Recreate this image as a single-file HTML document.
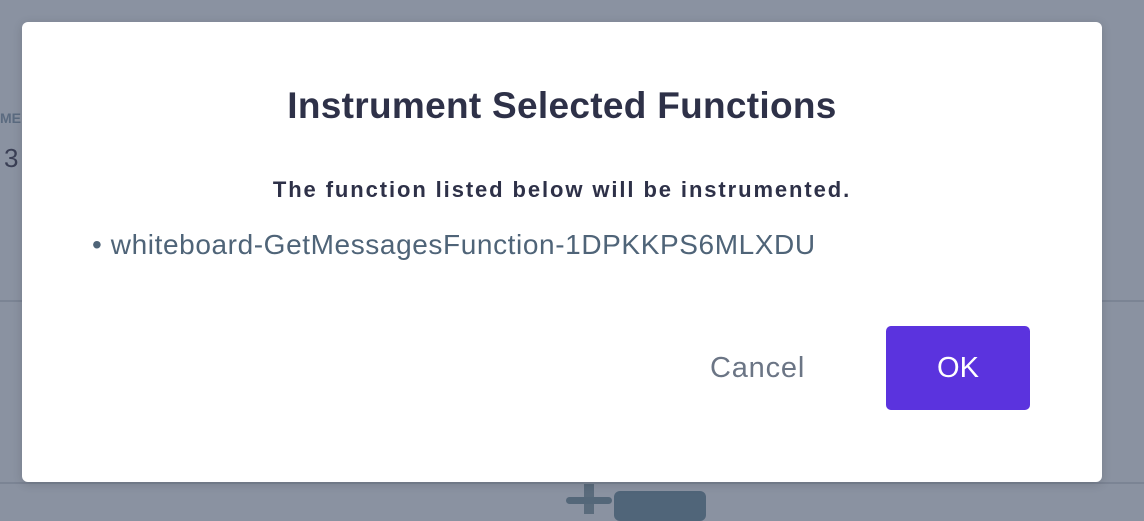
<!DOCTYPE html>
<html><head><style>
body{margin:0;width:1144px;height:514px;background:#8a92a1;position:relative;overflow:hidden;font-family:"Liberation Sans",sans-serif}
.bg1{position:absolute;left:0;top:110px;font-size:14px;font-weight:bold;color:#5b6b80}
.bg2{position:absolute;left:4px;top:143px;font-size:26px;color:#3a3f55}
.line{position:absolute;left:0;right:0;top:300px;height:2px;background:#7b8494}
.line2{position:absolute;left:0;right:0;top:482px;height:2px;background:#7b8494}
.b1{position:absolute;left:566px;top:497px;width:46px;height:7px;border-radius:4px;background:#546779}
.b2{position:absolute;left:614px;top:491px;width:92px;height:30px;border-radius:6px;background:#506579}
.b3{position:absolute;left:584px;top:484px;width:10px;height:30px;background:#5a6b7c}
.modal{position:absolute;left:22px;top:22px;width:1080px;height:460px;background:#fff;border-radius:6px;box-shadow:0 2px 10px rgba(0,0,0,.15)}
h1{position:absolute;left:0;right:0;top:63px;margin:0;text-align:center;font-size:37px;font-weight:bold;color:#2e3148;letter-spacing:0.3px}
.p{position:absolute;left:0;right:0;top:155px;text-align:center;font-size:22px;font-weight:bold;color:#2e3148;letter-spacing:1.9px}
.li{position:absolute;left:70px;top:207px;font-size:28px;color:#4f6478;letter-spacing:0.6px}
.cancel{position:absolute;left:688px;top:330px;font-size:29px;color:#6b7585;letter-spacing:0.8px}
.ok{position:absolute;left:864px;top:304px;width:144px;height:84px;background:#5b33de;border-radius:5px;color:#fff;font-size:29px;text-align:center;line-height:84px}
</style></head><body>
<div class="bg1">ME</div><div class="bg2">3</div><div class="line"></div><div class="line2"></div>
<div class="b3"></div><div class="b1"></div><div class="b2"></div>
<div class="modal">
<h1>Instrument Selected Functions</h1>
<div class="p">The function listed below will be instrumented.</div>
<div class="li">• whiteboard-GetMessagesFunction-1DPKKPS6MLXDU</div>
<div class="cancel">Cancel</div>
<div class="ok">OK</div>
</div>
</body></html>
